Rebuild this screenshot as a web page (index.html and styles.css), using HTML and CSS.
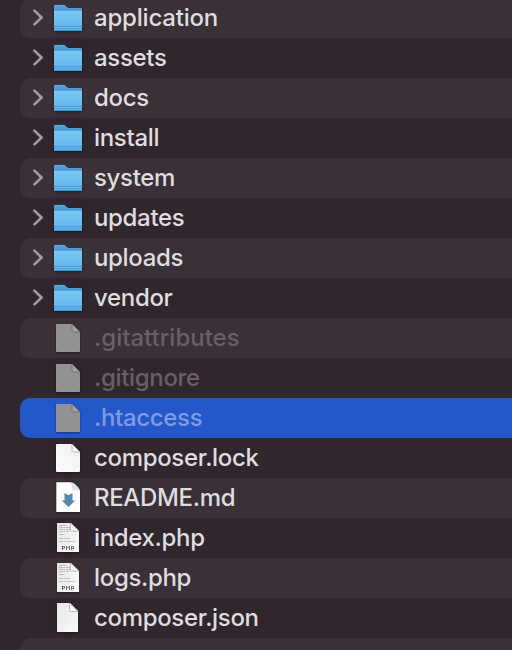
FILE: index.html
```
<!DOCTYPE html>
<html lang="en">
<head>
<meta charset="utf-8">
<title>Files</title>
<link rel="stylesheet" href="styles.css">
</head>
<body>
<svg class="defs" aria-hidden="true">
  <defs>
    <linearGradient id="front" x1="0" y1="0" x2="0" y2="1"><stop offset="0" stop-color="#78c8f6"/><stop offset="1" stop-color="#5db3e9"/></linearGradient>
    <linearGradient id="back" x1="0" y1="0" x2="0" y2="1"><stop offset="0" stop-color="#559fdc"/><stop offset="1" stop-color="#3c83c8"/></linearGradient>
    <linearGradient id="paper" x1="1" y1="0" x2="0" y2="1"><stop offset="0" stop-color="#f0f0f0"/><stop offset="1" stop-color="#fdfdfd"/></linearGradient>
    <linearGradient id="sheet" x1="0" y1="0" x2="1" y2="1"><stop offset="0" stop-color="#e6e6e6"/><stop offset="1" stop-color="#fafafa"/></linearGradient>
  </defs>
  <symbol id="chevron" viewBox="0 0 14 20"><path d="M3.400 2.600 10.600 9.500 3.400 16.400" fill="none" stroke="#a19ca1" stroke-width="2.600" stroke-linecap="round" stroke-linejoin="round"/></symbol>
  <symbol id="folder" viewBox="0 0 40 40">
    <path d="M6 8q0-1 1-1h8.500q1 0 2 1l1.500 1.300q1 .7 2 .7H33q1 0 1 1v19H6z" fill="url(#back)"/>
    <path d="M7 7.400h8.500q1 0 2 1" fill="none" stroke="#6db8ef" stroke-width=".8"/>
    <path d="M6 13h28v19q0 1-1 1H7q-1 0-1-1z" fill="url(#front)"/>
    <path d="M6 13.400h28" stroke="#85d1fa" stroke-width=".8"/>
    <path d="M6 28.500h28" stroke="#469cd6" stroke-width=".8"/>
    <path d="M6 30.500h28" stroke="#469cd6" stroke-width=".6"/>
    <path d="M6.500 32.500h27" stroke="#3f94cf" stroke-width="1"/>
  </symbol>
  <symbol id="file" viewBox="0 0 40 40">
    <path d="M9 6h15l8 8v19q0 1-1 1H9q-1 0-1-1V7q0-1 1-1z" fill="url(#paper)"/>
    <path d="M24 6v6.500q0 1.500 1.500 1.500H32z" fill="#fafafa" stroke="#a8a8a8" stroke-width=".8"/>
  </symbol>
  <symbol id="hidden" viewBox="0 0 40 40">
    <path d="M9 6h15l8 8v19q0 1-1 1H9q-1 0-1-1V7q0-1 1-1z" fill="#929292"/>
    <path d="M24 6v6.500q0 1.500 1.500 1.500H32z" fill="#a3a3a3" stroke="#6b696c" stroke-width=".8"/>
  </symbol>
  <symbol id="readme" viewBox="0 0 40 40">
    <path d="M8.300 4.200H22q3 0 5 2l3 3q2 2 2 5V34H8.300z" fill="#fff"/>
    <path d="M22 4.200q2 1.500 2 5.800 0 2 2 2 5 0 6 2.500l-2-5-3-3z" fill="#e1e1e1"/>
    <path d="m16.500 15 4 2.200 4-2.200v7.500h2.800L20.500 29l-6.800-6.500h2.800z" fill="#5589a9"/>
  </symbol>
  <symbol id="json" viewBox="0 0 40 40">
    <path d="M9 5h13l8 8v21H9z" fill="url(#sheet)"/>
    <path d="M21.500 5v7.500q0 1 1 1H30z" fill="#fff" stroke="#b3b3b3" stroke-width=".8"/>
  </symbol>
  <symbol id="php" viewBox="0 0 40 40">
    <path d="M9 5h14l8 8v21H9z" fill="url(#sheet)"/>
    <path d="M11 7.500h8M11 9.500h11M11 11.500h11M11 13.500h10M11 16.500h5M11 20.500h12M11 23.500h16" stroke="#b0b0b0" stroke-width=".8" stroke-dasharray="4 .6 2 .5"/>
    <path d="M22.500 5v7q0 1 1 1H31z" fill="#fff" stroke="#aaa" stroke-width=".8"/>
  </symbol>
</svg>
<main class="list">
  <div class="row"><svg class="chev"><use href="#chevron"/></svg><svg class="icon"><use href="#folder"/></svg><span class="even">application</span></div>
  <div class="row"><svg class="chev"><use href="#chevron"/></svg><svg class="icon"><use href="#folder"/></svg><span>assets</span></div>
  <div class="row"><svg class="chev"><use href="#chevron"/></svg><svg class="icon"><use href="#folder"/></svg><span>docs</span></div>
  <div class="row"><svg class="chev"><use href="#chevron"/></svg><svg class="icon"><use href="#folder"/></svg><span>install</span></div>
  <div class="row"><svg class="chev"><use href="#chevron"/></svg><svg class="icon"><use href="#folder"/></svg><span>system</span></div>
  <div class="row"><svg class="chev"><use href="#chevron"/></svg><svg class="icon"><use href="#folder"/></svg><span>updates</span></div>
  <div class="row"><svg class="chev"><use href="#chevron"/></svg><svg class="icon"><use href="#folder"/></svg><span>uploads</span></div>
  <div class="row"><svg class="chev"><use href="#chevron"/></svg><svg class="icon"><use href="#folder"/></svg><span>vendor</span></div>
  <div class="row dim"><svg class="icon"><use href="#hidden"/></svg><span class="loose">.gitattributes</span></div>
  <div class="row dim"><svg class="icon"><use href="#hidden"/></svg><span>.gitignore</span></div>
  <div class="row dim selected"><svg class="icon"><use href="#hidden"/></svg><span>.htaccess</span></div>
  <div class="row"><svg class="icon"><use href="#file"/></svg><span>composer.lock</span></div>
  <div class="row"><svg class="icon"><use href="#readme"/></svg><span>README.md</span></div>
  <div class="row"><svg class="icon"><use href="#php"/><text x="20.200" y="31.500" text-anchor="middle" class="badge">PHP</text></svg><span>index.php</span></div>
  <div class="row"><svg class="icon"><use href="#php"/><text x="20.200" y="31.500" text-anchor="middle" class="badge">PHP</text></svg><span>logs.php</span></div>
  <div class="row"><svg class="icon"><use href="#json"/></svg><span>composer.json</span></div>
  <div class="row"></div>
</main>
</body>
</html>
```
FILE: styles.css
```
body {
  margin: 0;
  height: 650px;
  overflow: hidden;
  background: #30262d;
  font-family: Inter, "Liberation Sans", sans-serif;
}
.defs { display: block; width: 0; height: 0; }
.list { margin: -2px 0 0 20px; }
.row {
  display: grid;
  grid-template-columns: 28px 40px 1fr;
  align-items: center;
  height: 40px;
  border-radius: 10px 0 0 10px;
  color: #dfdddf;
  font-size: 24px;
  font-weight: 450;
  line-height: 40px;
  white-space: nowrap;
}
.row:nth-child(odd) { background: #3a3037; }
.chev { width: 14px; height: 20px; margin-left: 11px; }
.icon {
  grid-column: 2;
  width: 40px;
  height: 40px;
  filter: drop-shadow(0 1px 1px rgba(0, 0, 0, .4));
}
.row span { grid-column: 3; padding-left: 6px; letter-spacing: -.33px; }
.row .even { letter-spacing: -.2px; }
.row .loose { letter-spacing: 0; }
.dim { color: #686066; }
.row.selected { background: #2457ca; color: #7f9be2; }
.badge {
  font: 600 6px "Open Sans", sans-serif;
  letter-spacing: .5px;
  fill: #333;
}
```
